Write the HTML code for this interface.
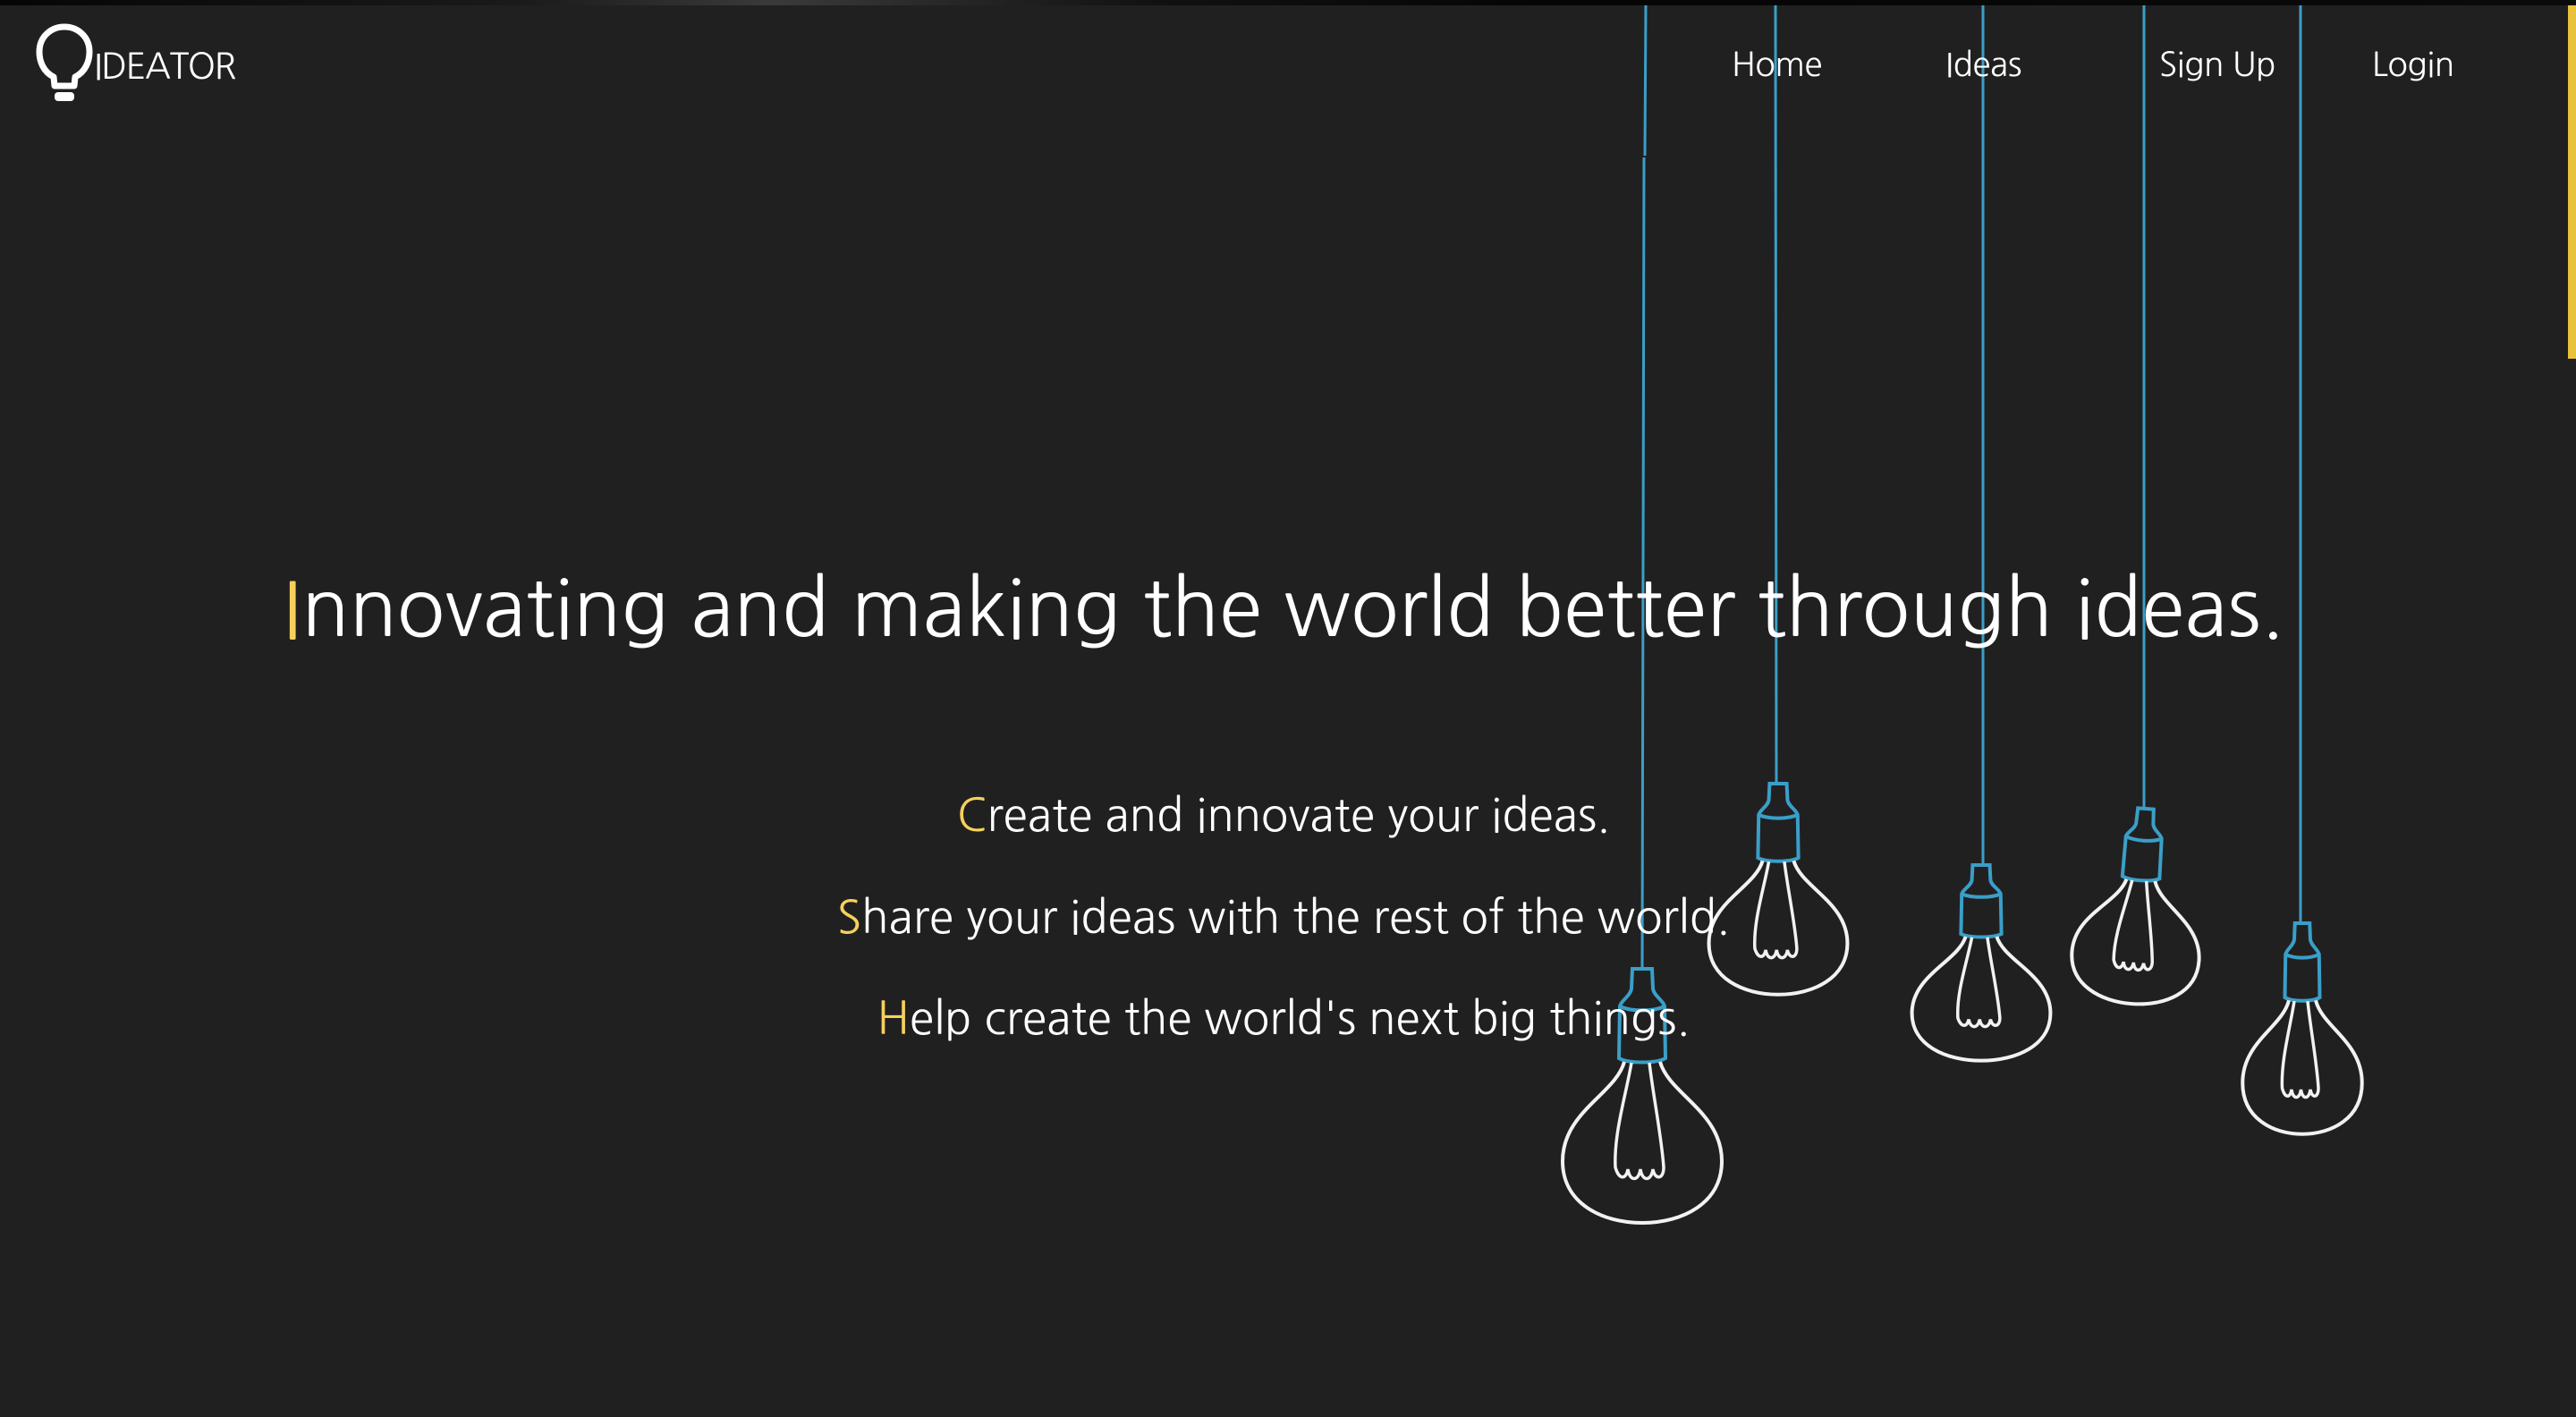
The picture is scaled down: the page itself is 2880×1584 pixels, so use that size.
<!DOCTYPE html>
<html><head><meta charset="utf-8"><style>
html,body{margin:0;padding:0;width:2880px;height:1584px;overflow:hidden;background:#212021;}
body{position:relative;font-family:"NanumGothic","Liberation Sans",sans-serif;color:#fff;}
.top{position:absolute;left:0;top:0;width:2880px;height:6px;background:linear-gradient(90deg,#050505,#1a1a1a 20%,#3a3a3a 30%,#111 45%,#050505 60%,#0a0a0a);}
.ybar{position:absolute;left:2871px;top:6px;width:9px;height:395px;background:#e8c33a;}
.logo{position:absolute;left:105px;top:51px;font-size:40px;line-height:46px;letter-spacing:-1.6px;}
.nav{position:absolute;top:50px;font-size:37px;line-height:46px;letter-spacing:-0.5px;}
.c{position:absolute;left:0;width:2870px;text-align:center;white-space:nowrap;}
.y{color:#f5d15c;}
h1{margin:0;font-weight:normal;font-size:88px;line-height:88px;top:636px;}
.s{font-size:50px;line-height:50px;}
svg{position:absolute;left:0;top:0;}
</style></head><body>
<div class="top"></div>
<div class="ybar"></div>
<svg width="2880" height="1584" viewBox="0 0 2880 1584">
<defs>
<g id="b">
<path d="M-11 0 H11 L12 22 C13 30 24 36 25 42 L26 100 C15 106 -15 106 -26 100 L-25 42 C-24 36 -13 30 -12 22 Z" fill="none" stroke="#3a9fc8" stroke-width="4" vector-effect="non-scaling-stroke"/>
<path d="M-25 42 C-12 48 12 48 25 42" fill="none" stroke="#3a9fc8" stroke-width="4" vector-effect="non-scaling-stroke"/>
<path d="M-20 104 C-30 140 -89 160 -89 215 C-89 262 -45 284 0 284 C45 284 89 262 89 215 C89 160 30 140 20 104" fill="none" stroke="#f2f2f2" stroke-width="4" vector-effect="non-scaling-stroke"/>
<path d="M-12 105 C-18 140 -32 185 -30 222 C-26 236 -18 236 -16 224 C-14 238 -4 238 -2 224 C0 238 10 238 12 224 C14 236 24 236 24 222 C22 190 12 140 8 105" fill="none" stroke="#f2f2f2" stroke-width="3.5" vector-effect="non-scaling-stroke"/>
</g>
</defs>
<g stroke="#3a9fc8" stroke-width="3" fill="none">
<path d="M1840 6 L1839 174 M1838 176 L1836 1084"/>
<path d="M1985 6 L1986 878"/>
<path d="M2217 6 L2217 968"/>
<path d="M2397 6 L2397 904"/>
<path d="M2572 6 L2572 1032"/>
</g>
<use href="#b" transform="translate(1836 1083) scale(1)"/>
<use href="#b" transform="translate(1988 876) scale(0.87 0.83)"/>
<use href="#b" transform="translate(2215 967) scale(0.87 0.77)"/>
<use href="#b" transform="translate(2399 904) rotate(4) scale(0.8 0.77)"/>
<use href="#b" transform="translate(2574 1032) scale(0.75 0.83)"/>
<g fill="none" stroke="#fff" stroke-width="7">
<path d="M60 86 C48 80 44 68 44 58 C44 41 57 30 72 30 C87 30 100 41 100 58 C100 68 96 80 84 86 L83 96 H61 Z" stroke-linejoin="round"/>
</g>
<rect x="61" y="103" width="22" height="10" rx="4" fill="#fff"/>
</svg>
<div class="logo">IDEATOR</div>
<div class="nav" style="left:1936px">Home</div>
<div class="nav" style="left:2175px">Ideas</div>
<div class="nav" style="left:2414px">Sign Up</div>
<div class="nav" style="left:2652px">Login</div>
<h1 class="c"><span class="y">I</span>nnovating and making the world better through ideas.</h1>
<div class="c s" style="top:887px"><span class="y">C</span>reate and innovate your ideas.</div>
<div class="c s" style="top:1001px"><span class="y">S</span>hare your ideas with the rest of the world.</div>
<div class="c s" style="top:1114px"><span class="y">H</span>elp create the world's next big things.</div>
</body></html>
